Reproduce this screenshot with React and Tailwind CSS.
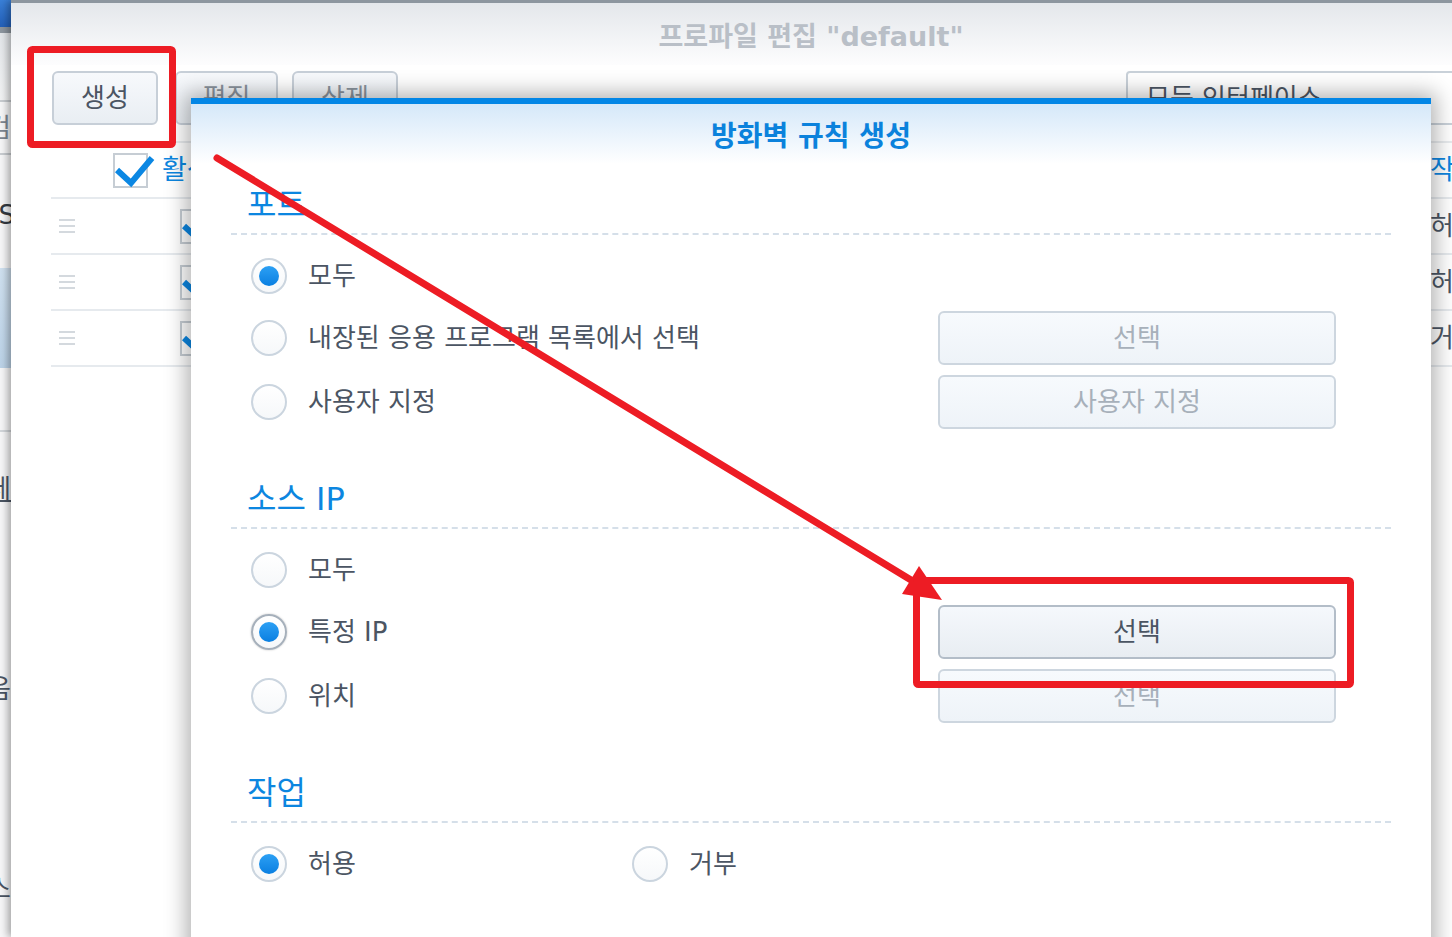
import React from "react";

function Radio({ checked = false, focus = false }) {
  return (
    <span
      className={
        "flex h-[36px] w-[36px] shrink-0 items-center justify-center rounded-full border-2 bg-gradient-to-b from-white to-[#f6f8fa] " +
        (focus ? "border-[#a6b0bb] shadow-[0_0_2px_rgba(0,0,0,0.25)]" : "border-[#cbd5df]")
      }
    >
      {checked && (
        <span className="h-[20px] w-[20px] rounded-full bg-gradient-to-b from-[#2ba0f4] to-[#087fe1]" />
      )}
    </span>
  );
}

function RadioRow({ label, checked, focus }) {
  return (
    <div className="flex items-center gap-[21px] pl-[20px]">
      <Radio checked={checked} focus={focus} />
      <span className="whitespace-nowrap text-[26px] leading-[32px] text-[#4b5563]">{label}</span>
    </div>
  );
}

function Btn({ children, active = false }) {
  return (
    <div
      className={
        "flex h-[54px] w-[398px] items-center justify-center rounded-[6px] border-2 text-[26px] " +
        (active
          ? "border-[#b3bdc8] bg-gradient-to-b from-[#f5f8fc] to-[#e8edf2] text-[#4b5563]"
          : "border-[#cdd6df] bg-gradient-to-b from-[#f7fafd] to-[#eef3f8] text-[#a7b0ba]")
      }
    >
      {children}
    </div>
  );
}

function Section({ title, first = false, children }) {
  return (
    <div>
      <div
        className={
          (first ? "mt-[19px]" : "mt-[43px]") +
          " h-[40px] whitespace-nowrap pl-[16px] text-[32px] leading-[45px] text-[#0c86e0]"
        }
      >
        {title}
      </div>
      <div className="mt-[10px] border-t-2 border-dashed border-[#d5dfe9]" />
      <div className="mt-[11px]">{children}</div>
    </div>
  );
}

function Check() {
  return (
    <svg className="absolute left-0 top-0" width="44" height="36" viewBox="0 0 44 36">
      <polyline
        points="2,15 16,28 37,3"
        fill="none"
        stroke="#0b87e3"
        strokeWidth="6"
        strokeLinejoin="miter"
      />
    </svg>
  );
}

function CheckBox() {
  return (
    <div className="relative h-[35px] w-[35px] border-2 border-[#c6cdd4] bg-white">
      <Check />
    </div>
  );
}

function Hamburger() {
  return (
    <div className="flex w-[16px] flex-col gap-[4px]">
      <span className="h-[2px] bg-[#d4d9de]" />
      <span className="h-[2px] bg-[#d4d9de]" />
      <span className="h-[2px] bg-[#d4d9de]" />
    </div>
  );
}

function TableRow({ action }) {
  return (
    <div className="flex h-[56px] items-center border-b-2 border-[#e6eaee]">
      <div className="w-[129px] pl-[8px]">
        <Hamburger />
      </div>
      <div className="w-[1250px]">
        <CheckBox />
      </div>
      <div className="whitespace-nowrap text-[26px] text-[#4b5563]">{action}</div>
    </div>
  );
}

function StripText({ children, className = "" }) {
  return (
    <div className={"flex justify-end whitespace-nowrap text-[26px] leading-[30px] " + className}>
      <span className="shrink-0">{children}</span>
    </div>
  );
}

export default function App() {
  return (
    <div className="relative h-[937px] w-[1452px] overflow-hidden bg-white font-['DejaVu_Sans','Noto_Sans_CJK_KR',sans-serif]">
      <div className="flex h-full">
        {/* far background window strip */}
        <div className="flex w-[11px] shrink-0 flex-col overflow-hidden bg-[#f7f7f8]">
          <div className="h-[27px] shrink-0 bg-gradient-to-b from-[#3a80d8] to-[#2360b9]" />
          <div className="h-[6px] shrink-0 bg-[#8d969f]" />
          <div className="h-[67px] shrink-0 bg-gradient-to-b from-[#e4e7ea] to-[#f2f3f4]" />
          <div className="h-[2px] shrink-0 bg-[#c9cdd1]" />
          <div className="flex h-[51px] shrink-0 items-center justify-end">
            <StripText className="text-[#7d8792]">검</StripText>
          </div>
          <div className="h-[2px] shrink-0 bg-[#c9cdd1]" />
          <div className="flex h-[113px] shrink-0 items-center justify-end pt-[6px]">
            <StripText className="mr-[-4px] text-[#333a42]">S</StripText>
          </div>
          <div className="h-[100px] shrink-0 bg-gradient-to-b from-[#d0e1f0] to-[#bcd3e8]" />
          <div className="h-[62px] shrink-0" />
          <div className="h-[2px] shrink-0 bg-[#d3d7db]" />
          <div className="mt-[42px] flex justify-end">
            <StripText className="text-[#4b5563] underline">페</StripText>
          </div>
          <div className="mt-[170px] flex justify-end">
            <StripText className="text-[#4b5563]">음</StripText>
          </div>
          <div className="mt-[170px] flex justify-end">
            <StripText className="text-[#4b5563]">스</StripText>
          </div>
        </div>

        {/* profile edit window */}
        <div className="relative w-[1600px] shrink-0 bg-white shadow-[-3px_0_8px_rgba(0,0,0,0.35)]">
          <div className="h-[3px] bg-[#8d969f]" />
          <div className="flex h-[62px] items-center justify-center bg-gradient-to-b from-[#e4e7eb] to-[#fdfdfe] pt-[6px] text-[27px] font-bold text-[#b9bfc7]">
            프로파일 편집 "default"
          </div>
          <div className="ml-[41px] mt-[6px] flex h-[54px] items-center">
            <div className="flex h-[54px] w-[106px] items-center justify-center rounded-[6px] border-2 border-[#c7cfd8] bg-gradient-to-b from-[#f7f9fc] to-[#e9eef3] text-[26px] text-[#4b5563]">
              생성
            </div>
            <div className="ml-[17px] flex h-[54px] w-[103px] items-center justify-center rounded-[6px] border-2 border-[#c7cfd8] bg-gradient-to-b from-[#f7f9fc] to-[#e9eef3] text-[26px] text-[#8a939d]">
              편집
            </div>
            <div className="ml-[14px] flex h-[54px] w-[106px] items-center justify-center rounded-[6px] border-2 border-[#c7cfd8] bg-gradient-to-b from-[#f7f9fc] to-[#e9eef3] text-[26px] text-[#8a939d]">
              삭제
            </div>
            <div className="ml-[728px] flex h-[54px] w-[420px] items-center rounded-[4px] border-2 border-[#c9d1d9] bg-white pl-[18px] text-[26px] text-[#4b5563]">
              모든 인터페이스
            </div>
          </div>
          <div className="ml-[40px] mt-[16px] w-[1480px]">
            <div className="h-[2px] bg-[#e8ebee]" />
            <div className="flex h-[56px] items-center border-b-2 border-[#e6eaee]">
              <div className="w-[62px]" />
              <CheckBox />
              <div className="ml-[14px] w-[1268px] text-[27px] text-[#0c86e0]">활성화</div>
              <div className="text-[27px] text-[#0c86e0]">작업</div>
            </div>
            <TableRow action="허용" />
            <TableRow action="허용" />
            <TableRow action="거부" />
          </div>
        </div>
      </div>

      {/* modal dialog */}
      <div className="absolute left-[191px] top-[98px] h-[860px] w-[1240px] border-t-[6px] border-[#0286e6] bg-white shadow-[0_0_20px_5px_rgba(0,0,0,0.3)]">
        <div className="flex h-[60px] items-center justify-center bg-gradient-to-b from-[#d5e8f9] to-white pt-[6px] text-[28px] font-bold text-[#0b82dc]">
          방화벽 규칙 생성
        </div>
        <div className="px-[40px]">
          <Section title="포트" first>
            <div className="grid grid-cols-[707px_398px]">
              <div className="flex h-[60px] items-center">
                <RadioRow label="모두" checked />
              </div>
              <div />
              <div className="flex h-[64px] items-center">
                <RadioRow label="내장된 응용 프로그램 목록에서 선택" />
              </div>
              <div className="flex items-center">
                <Btn>선택</Btn>
              </div>
              <div className="flex h-[64px] items-center">
                <RadioRow label="사용자 지정" />
              </div>
              <div className="flex items-center">
                <Btn>사용자 지정</Btn>
              </div>
            </div>
          </Section>

          <Section title="소스 IP">
            <div className="grid grid-cols-[707px_398px]">
              <div className="flex h-[60px] items-center">
                <RadioRow label="모두" />
              </div>
              <div />
              <div className="flex h-[64px] items-center">
                <RadioRow label="특정 IP" checked focus />
              </div>
              <div className="flex items-center">
                <Btn active>선택</Btn>
              </div>
              <div className="flex h-[64px] items-center">
                <RadioRow label="위치" />
              </div>
              <div className="flex items-center">
                <Btn>선택</Btn>
              </div>
            </div>
          </Section>

          <Section title="작업">
            <div className="flex h-[60px] items-center">
              <div className="w-[381px]">
                <RadioRow label="허용" checked />
              </div>
              <RadioRow label="거부" />
            </div>
          </Section>
        </div>
      </div>

      {/* red annotations */}
      <svg
        className="pointer-events-none absolute left-0 top-0"
        width="1452"
        height="937"
        viewBox="0 0 1452 937"
      >
        <rect x="30.5" y="49.5" width="142" height="95" rx="2" fill="none" stroke="#ed1c24" strokeWidth="7" />
        <line x1="217" y1="158" x2="911" y2="580" stroke="#ed1c24" strokeWidth="7" strokeLinecap="round" />
        <polygon points="902,594 919,566 942,600" fill="#ed1c24" />
        <rect x="916.5" y="580.5" width="434" height="104" rx="2" fill="none" stroke="#ed1c24" strokeWidth="7" />
      </svg>
    </div>
  );
}
